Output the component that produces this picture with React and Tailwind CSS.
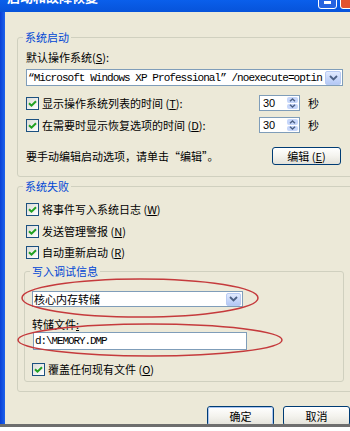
import React from "react";

function Check() {
  return (
    <span className="flex h-[13px] w-[13px] shrink-0 items-center justify-center border border-[#1C5180] bg-linear-to-br from-[#DCDCD7] to-white">
      <svg width="9" height="9" viewBox="0 0 9 9">
        <path d="M1 4.2 L3.5 6.7 L8 2.2" fill="none" stroke="#21A121" strokeWidth="2" />
      </svg>
    </span>
  );
}

function CheckRow({ children, className = "" }) {
  return (
    <div className={"flex h-[14px] items-center gap-[3px] " + className}>
      <Check />
      <span className="whitespace-nowrap">{children}</span>
    </div>
  );
}

function ArrowBtn() {
  return (
    <span className="flex h-[14px] w-[16px] shrink-0 items-center justify-center rounded-[2px] border border-[#B9CBF3] bg-linear-to-b from-[#E1EAFE] to-[#B4C8F5]">
      <svg width="9" height="6" viewBox="0 0 9 6">
        <path d="M1 1 L4.5 4.5 L8 1" fill="none" stroke="#4D6185" strokeWidth="1.8" />
      </svg>
    </span>
  );
}

function Spin() {
  return (
    <div className="flex h-[16px] w-[41px] shrink-0 border border-[#7F9DB9] bg-white">
      <span className="flex-1 pl-[3px] font-['Liberation_Sans',sans-serif] text-[11px] leading-[14px]">30</span>
      <div className="flex w-[13px] flex-col gap-px p-px">
        <span className="flex flex-1 items-center justify-center rounded-[2px] bg-[#C6D6FA]">
          <svg width="7" height="4" viewBox="0 0 7 4">
            <path d="M1 3.3 L3.5 1 L6 3.3" fill="none" stroke="#4D6185" strokeWidth="1.4" />
          </svg>
        </span>
        <span className="flex flex-1 items-center justify-center rounded-[2px] bg-[#C6D6FA]">
          <svg width="7" height="4" viewBox="0 0 7 4">
            <path d="M1 0.7 L3.5 3 L6 0.7" fill="none" stroke="#4D6185" strokeWidth="1.4" />
          </svg>
        </span>
      </div>
    </div>
  );
}

function XPButton({ children, className = "", def = false }) {
  return (
    <div
      className={
        "flex shrink-0 items-center justify-center rounded-[3px] border border-[#003C74] bg-linear-to-b from-white via-[#F4F3EE] to-[#E3E2DA] " +
        className
      }
    >
      <div
        className={
          "flex h-full w-full items-center justify-center rounded-[2px] " +
          (def ? "border border-[#A9C4F0]" : "")
        }
      >
        {children}
      </div>
    </div>
  );
}

export default function App() {
  return (
    <div className="relative h-[431px] w-[350px] overflow-hidden bg-white font-['Noto_Sans_CJK_SC','Noto_Sans',sans-serif] text-[11px] leading-[14px] text-black">
      <div className="flex h-[424px] w-[372px] flex-col">
        {/* title bar */}
        <div className="flex h-[12px] shrink-0 justify-between overflow-hidden bg-linear-to-b from-[#0A5FEB] to-[#0753DA] pr-[13px]">
          <span className="ml-[7px] mt-[-10px] text-[13px] font-bold leading-[13px] text-white">启动和故障恢复</span>
          <div className="mt-[-10px] flex gap-[3px]">
            <div className="flex h-[19px] w-[19px] items-end justify-center rounded-[3px] border border-white bg-[#2663E0] pb-[4px]">
              <span className="h-[3px] w-[7px] bg-white" />
            </div>
            <div className="h-[19px] w-[19px] rounded-[3px] border border-white bg-[#E2532F]" />
          </div>
        </div>
        <div className="flex min-h-0 flex-1">
          <div className="w-[5px] shrink-0 bg-linear-to-r from-[#0A3FD6] to-[#1E62EC]" />
          <div className="flex-1 overflow-hidden bg-[#ECE9D8] pl-[12px] pt-[18px]">
            {/* 系统启动 */}
            <fieldset className="w-[340px] rounded-[3px] border border-[#D0D0BF]">
              <legend className="ml-[5px] px-[2px] leading-[14px] text-[#0046D5]">系统启动</legend>
              <div className="pb-[11px] pl-[8px]">
                <div className="mt-[6px] h-[14px] whitespace-nowrap">
                  默认操作系统(<u>S</u>):
                </div>
                <div className="mt-[5px] flex h-[17px] w-[317px] items-center border border-[#7F9DB9] bg-white pl-[1px] pr-px">
                  <span className="flex-1 overflow-hidden whitespace-nowrap font-['Liberation_Mono',monospace] text-[11px] leading-[14px] tracking-[-0.95px]">
                    “Microsoft Windows XP Professional” /noexecute=optin
                  </span>
                  <ArrowBtn />
                </div>
                <div className="mt-[9px] flex h-[16px] items-center">
                  <CheckRow className="w-[233px]">
                    显示操作系统列表的时间 (<u>T</u>):
                  </CheckRow>
                  <Spin />
                  <span className="ml-[8px]">秒</span>
                </div>
                <div className="mt-[6px] flex h-[16px] items-center">
                  <CheckRow className="w-[233px]">
                    在需要时显示恢复选项的时间 (<u>D</u>):
                  </CheckRow>
                  <Spin />
                  <span className="ml-[8px]">秒</span>
                </div>
                <div className="mt-[14px] flex h-[18px] w-[315px] items-center justify-between">
                  <span className="whitespace-nowrap">要手动编辑启动选项，请单击“编辑”。</span>
                  <XPButton className="h-[18px] w-[69px]">
                    编辑 (<u>E</u>)
                  </XPButton>
                </div>
              </div>
            </fieldset>

            {/* 系统失败 */}
            <fieldset className="mt-[2px] w-[340px] rounded-[3px] border border-[#D0D0BF]">
              <legend className="ml-[5px] px-[2px] leading-[14px] text-[#0046D5]">系统失败</legend>
              <div className="pb-[9px] pl-[6px]">
                <CheckRow className="mt-[9px] pl-[2px]">
                  将事件写入系统日志 (<u>W</u>)
                </CheckRow>
                <CheckRow className="mt-[8px] pl-[2px]">
                  发送管理警报 (<u>N</u>)
                </CheckRow>
                <CheckRow className="mt-[7px] pl-[2px]">
                  自动重新启动 (<u>R</u>)
                </CheckRow>

                <fieldset className="mt-[5px] w-[320px] rounded-[3px] border border-[#D0D0BF]">
                  <legend className="ml-[5px] px-[2px] leading-[14px] text-[#0046D5]">写入调试信息</legend>
                  <div className="pb-[5px] pl-[7px]">
                    <div className="mt-[13px] flex h-[16px] w-[211px] items-center border border-[#7F9DB9] bg-white pl-[1px] pr-px">
                      <span className="flex-1 whitespace-nowrap">核心内存转储</span>
                      <span className="flex h-[13px] w-[15px] shrink-0 items-center justify-center rounded-[2px] border border-[#B9CBF3] bg-linear-to-b from-[#E1EAFE] to-[#B4C8F5]">
                        <svg width="9" height="6" viewBox="0 0 9 6">
                          <path d="M1 1 L4.5 4.5 L8 1" fill="none" stroke="#4D6185" strokeWidth="1.8" />
                        </svg>
                      </span>
                    </div>
                    <div className="mt-[10px] h-[14px] whitespace-nowrap">
                      转储文件<u>:</u>
                    </div>
                    <div className="ml-px mt-[1px] flex h-[18px] w-[214px] items-center border border-[#7F9DB9] bg-white pl-[1px]">
                      <span className="whitespace-nowrap font-['Liberation_Mono',monospace] text-[11px] leading-[14px] tracking-[-1.1px]">
                        d:\MEMORY.DMP
                      </span>
                    </div>
                    <CheckRow className="mt-[12px]">
                      覆盖任何现有文件 (<u>O</u>)
                    </CheckRow>
                  </div>
                </fieldset>
              </div>
            </fieldset>

            <div className="mt-[14px] flex gap-[9px] pl-[190px]">
              <XPButton def className="h-[20px] w-[67px]">
                确定
              </XPButton>
              <XPButton className="h-[20px] w-[67px]">取消</XPButton>
            </div>
          </div>
        </div>
      </div>
      <div className="h-[3px] w-full bg-[#6E6E6E]" />

      <svg className="pointer-events-none absolute left-0 top-0" width="350" height="431">
        <ellipse cx="140" cy="298" rx="118" ry="19" fill="none" stroke="#C53A3C" strokeWidth="1.5" />
        <ellipse cx="150" cy="340" rx="132" ry="16" fill="none" stroke="#C53A3C" strokeWidth="1.5" />
      </svg>
    </div>
  );
}
